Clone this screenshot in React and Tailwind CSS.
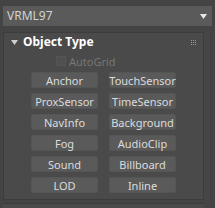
import React from 'react';

const BUTTONS = [
  ['Anchor', 'TouchSensor'],
  ['ProxSensor', 'TimeSensor'],
  ['NavInfo', 'Background'],
  ['Fog', 'AudioClip'],
  ['Sound', 'Billboard'],
  ['LOD', 'Inline'],
];

const font = { fontFamily: '"Noto Sans", "Open Sans", sans-serif' };

export default function App() {
  return (
    <div className="w-[215px] h-[208px] bg-[#444444] overflow-hidden pt-[6px] pl-[3px]" style={font}>
      {/* Dropdown */}
      <div className="w-[209px] h-[20px] bg-[#5a5a5a] flex items-center justify-between pl-[4px] pr-[5px]">
        <span className="text-[12px] leading-none text-[#d2d2d2]">VRML97</span>
        <svg width="7" height="5" viewBox="0 0 7 5"><path d="M0 0H7L3.5 5Z" fill="#e6e6e6" /></svg>
      </div>

      <div className="flex mt-[6px]">
        {/* Rollout */}
        <div className="w-[201px] h-[168px] bg-[#4a4a4a] border border-[#3c3c3c]">
          <div className="flex items-center h-[18px] pl-[7px] pr-[7px]">
            <svg width="7" height="5" viewBox="0 0 7 5"><path d="M0 0H7L3.5 5Z" fill="#cfcfcf" /></svg>
            <span className="ml-[5px] text-[12px] font-bold text-white leading-none">Object Type</span>
            <div className="ml-auto grid grid-cols-3 gap-[1px]">
              {Array.from({ length: 9 }).map((_, i) => (
                <div key={i} className="w-[1px] h-[1px] bg-[#9a9a9a]" />
              ))}
            </div>
          </div>

          <div className="flex items-center h-[14px] mt-[3px] pl-[52px]">
            <div className="w-[10px] h-[10px] bg-[#505050] border border-[#555555]" />
            <span className="ml-[3px] text-[11px] leading-none text-[#777777]">AutoGrid</span>
          </div>

          <div className="grid grid-cols-[67px_67px] gap-x-[11px] gap-y-[5px] mt-[4px] pl-[27px]">
            {BUTTONS.flat().map((b) => (
              <div key={b} className="h-[16px] bg-[#5a5a5a] border border-[#555555] rounded-[2px] flex items-center justify-center text-[11px] leading-none text-[#dcdcdc]">
                {b}
              </div>
            ))}
          </div>
        </div>
        {/* Scroll strip */}
        <div className="w-[7px] h-[168px] bg-[#464646] border-r border-[#3e3e3e]" />
      </div>

      <div className="w-[201px] h-[10px] mt-[3px] bg-[#4a4a4a] border-t border-[#3c3c3c]" />
    </div>
  );
}
